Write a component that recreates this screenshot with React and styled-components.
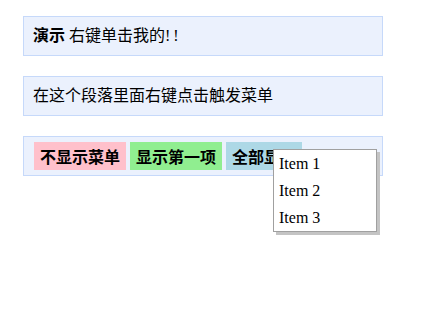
import React from 'react';
import styled, { createGlobalStyle } from 'styled-components';

const GlobalStyle = createGlobalStyle`
  html, body {
    height: 100%;
  }
  body {
    margin: 8px;
    background: #fff;
    font-family: "Liberation Serif", "Noto Sans CJK SC", serif;
    color: #000;
  }
`;

const Page = styled.div`
  min-height: 290px;
  padding: 8px 15px;
  display: flex;
  flex-direction: column;
  gap: 20px;
`;

const Box = styled.div`
  position: relative;
  box-sizing: border-box;
  width: 360px;
  height: 40px;
  padding: 10px 9px;
  background: #ebf1fd;
  border: 1px solid #c6d9fa;
  font-size: 16px;
  line-height: 18px;
`;

const Bang = styled.span`
  letter-spacing: 3px;
`;

const ButtonRow = styled(Box)`
  display: flex;
  align-items: center;
  gap: 4px;
  padding: 5px 10px;
`;

const Tag = styled.span`
  background: ${p => p.$bg};
  padding: 5px 6px;
  font-size: 16px;
  line-height: 18px;
  font-weight: 700;
  font-family: "Noto Sans CJK SC", sans-serif;
`;

const Menu = styled.ul`
  position: absolute;
  z-index: 10;
  left: 249px;
  top: 12px;
  margin: 0;
  padding: 0;
  list-style: none;
  width: 102px;
  background: #fff;
  border: 1px solid #a0a0a0;
  box-shadow: 3px 3px 0 #c4c4c4;
`;

const MenuItem = styled.li`
  height: 27px;
  padding: 0 5px;
  font-family: "Liberation Serif", serif;
  font-size: 16px;
  line-height: 27px;
`;

export default function App() {
  return (
    <>
      <GlobalStyle />
      <Page>
        <Box>
          <b>演示</b> 右键单击我的<Bang>!!</Bang>
        </Box>
        <Box>在这个段落里面右键点击触发菜单</Box>
        <ButtonRow>
          <Tag $bg="pink">不显示菜单</Tag>
          <Tag $bg="lightgreen">显示第一项</Tag>
          <Tag $bg="lightblue">全部显示</Tag>
          <Menu>
            <MenuItem>Item 1</MenuItem>
            <MenuItem>Item 2</MenuItem>
            <MenuItem>Item 3</MenuItem>
          </Menu>
        </ButtonRow>
      </Page>
    </>
  );
}
